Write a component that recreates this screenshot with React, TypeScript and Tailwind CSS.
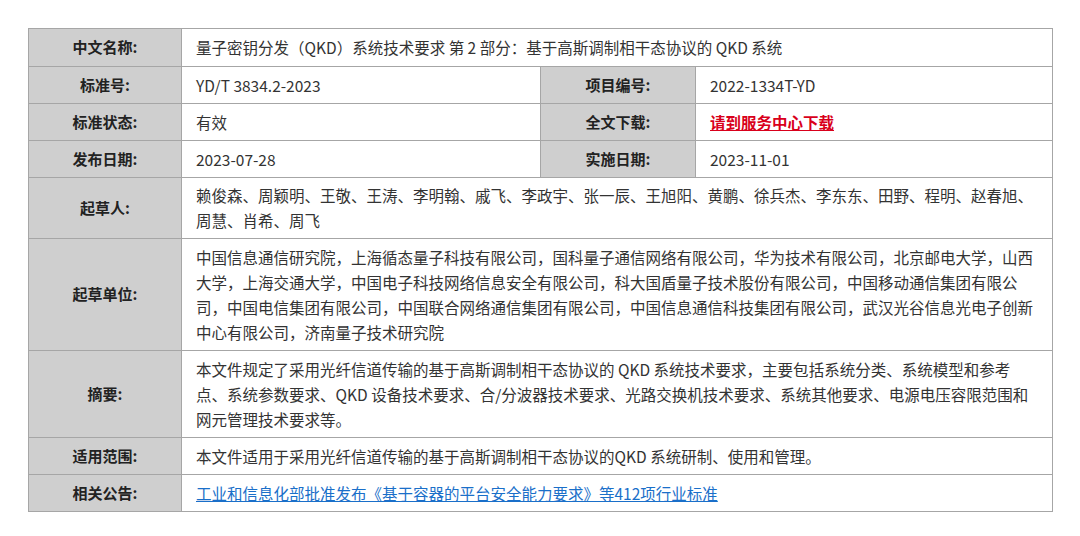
const L = "bg-[#cfcfcf] border border-[#a6a6a6] font-bold text-center text-[#222] w-[153px] text-[15px]";
const V = "border border-[#a6a6a6] px-[14px] py-[5px] text-[#333] leading-[25px]";
export default function App() {
  return (
    <div className="w-[1080px] h-[536px] bg-white pt-[28px] pl-[28px]" style={{ fontFamily: '"Microsoft YaHei","Noto Sans CJK SC",sans-serif' }}>
      <table className="w-[1025px] border-collapse text-[15.5px]">
        <tbody>
          <tr className="h-[38px]"><td className={L}>中文名称:</td><td className={V} colSpan={3}>量子密钥分发（QKD）系统技术要求 第 2 部分：基于高斯调制相干态协议的 QKD 系统</td></tr>
          <tr className="h-[37px]"><td className={L}>标准号:</td><td className={V + " w-[359px]"}>YD/T 3834.2-2023</td><td className={L + " w-[155px]"}>项目编号:</td><td className={V}>2022-1334T-YD</td></tr>
          <tr className="h-[37px]"><td className={L}>标准状态:</td><td className={V}>有效</td><td className={L}>全文下载:</td><td className={V}><a className="text-[#d9001b] font-bold underline">请到服务中心下载</a></td></tr>
          <tr className="h-[37px]"><td className={L}>发布日期:</td><td className={V}>2023-07-28</td><td className={L}>实施日期:</td><td className={V}>2023-11-01</td></tr>
          <tr className="h-[60px]"><td className={L}>起草人:</td><td className={V} colSpan={3}>赖俊森、周颖明、王敬、王涛、李明翰、戚飞、李政宇、张一辰、王旭阳、黄鹏、徐兵杰、李东东、田野、程明、赵春旭、周慧、肖希、周飞</td></tr>
          <tr className="h-[112px]"><td className={L}>起草单位:</td><td className={V} colSpan={3}>中国信息通信研究院，上海循态量子科技有限公司，国科量子通信网络有限公司，华为技术有限公司，北京邮电大学，山西大学，上海交通大学，中国电子科技网络信息安全有限公司，科大国盾量子技术股份有限公司，中国移动通信集团有限公司，中国电信集团有限公司，中国联合网络通信集团有限公司，中国信息通信科技集团有限公司，武汉光谷信息光电子创新中心有限公司，济南量子技术研究院</td></tr>
          <tr className="h-[87px]"><td className={L}>摘要:</td><td className={V} colSpan={3}>本文件规定了采用光纤信道传输的基于高斯调制相干态协议的 QKD 系统技术要求，主要包括系统分类、系统模型和参考点、系统参数要求、QKD 设备技术要求、合/分波器技术要求、光路交换机技术要求、系统其他要求、电源电压容限范围和网元管理技术要求等。</td></tr>
          <tr className="h-[37px]"><td className={L}>适用范围:</td><td className={V} colSpan={3}>本文件适用于采用光纤信道传输的基于高斯调制相干态协议的QKD 系统研制、使用和管理。</td></tr>
          <tr className="h-[37px]"><td className={L}>相关公告:</td><td className={V} colSpan={3}><a className="text-[#1a6fc9] underline">工业和信息化部批准发布《基于容器的平台安全能力要求》等412项行业标准</a></td></tr>
        </tbody>
      </table>
    </div>
  );
}
